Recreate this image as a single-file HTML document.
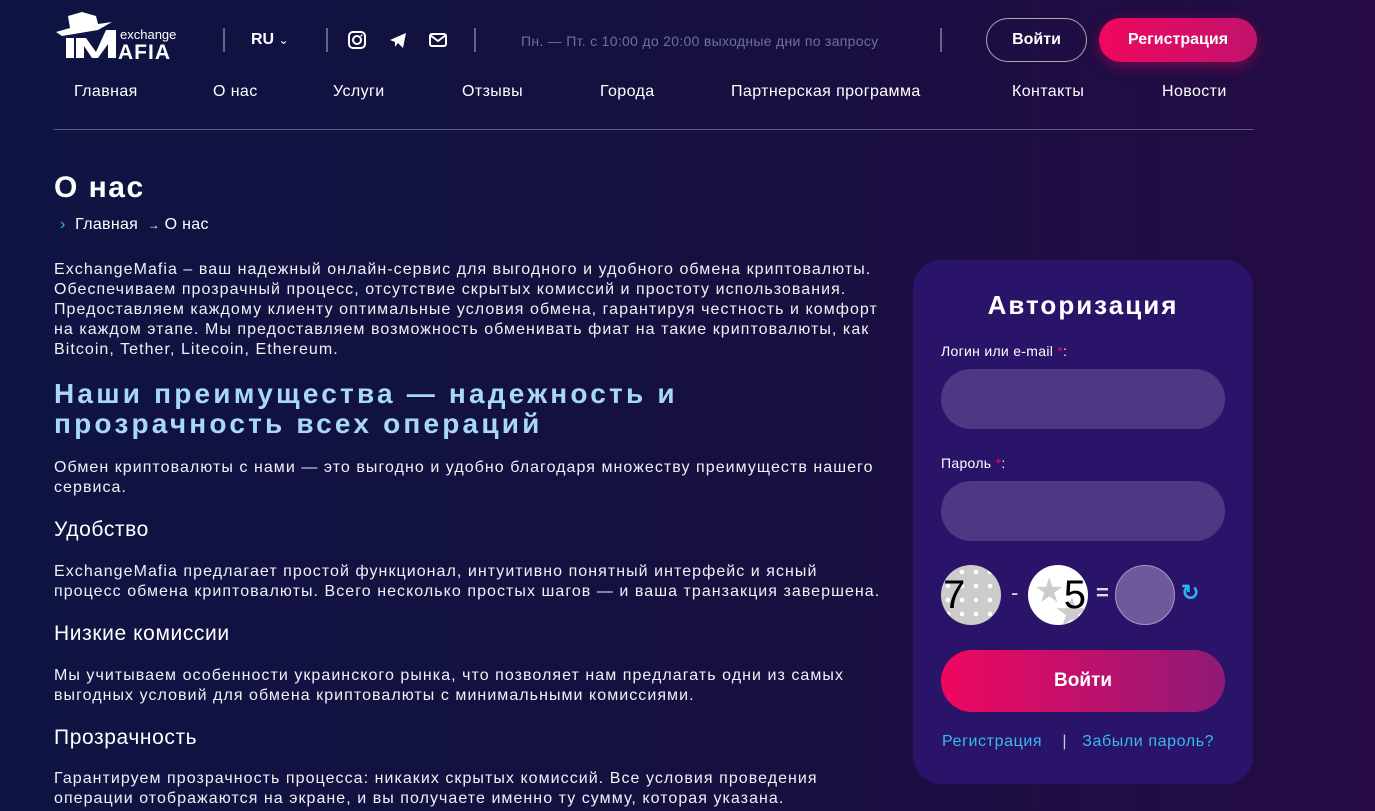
<!DOCTYPE html>
<html><head><meta charset="utf-8"><style>
*{margin:0;padding:0;box-sizing:border-box}
body{width:1375px;height:811px;overflow:hidden;font-family:"Liberation Sans",sans-serif;color:#fff;background:linear-gradient(90deg,#0e1442 0%,#151040 50%,#260b45 100%);position:relative}
.a{position:absolute}
.sep{position:absolute;top:28px;width:2px;height:24px;background:rgba(255,255,255,.35)}
.nav span{position:absolute;top:83px;font-size:16px;letter-spacing:.4px}
p.t{position:absolute;left:54px;font-size:16px;letter-spacing:1.05px;line-height:20px;color:#f0f0f5;white-space:nowrap}
h3{position:absolute;left:54px;font-weight:normal;font-size:21px;letter-spacing:.6px}
.card{left:913px;top:260px;width:340px;height:524px;border-radius:28px;background:#29146a}
.inp{position:absolute;left:28px;width:284px;height:60px;border-radius:30px;background:#4e3883}
.lbl{position:absolute;left:28px;font-size:14px;letter-spacing:.3px}
</style></head><body>
<div class="a" style="left:54px;top:8px;width:145px;height:52px">
<svg width="145" height="52"><path d="M14 8 L28 4 L42 8 L44 16 L58 14 L44 22 L8 28 L2 24 L16 20Z" fill="#fff"/><path d="M12 30 L20 30 L20 50 L12 50Z M22 30 L32 30 L42 44 L52 22 L62 22 L62 50 L54 50 L54 36 L44 50 L38 50 L30 38 L30 50 L22 50Z" fill="#fff"/><text x="66" y="31" font-size="13" fill="#fff" font-family="Liberation Sans">exchange</text><text x="64" y="51" font-size="21" fill="#fff" font-family="Liberation Sans" font-weight="bold" letter-spacing="1">AFIA</text></svg></div>
<div class="sep" style="left:223px"></div>
<div class="a" style="left:251px;top:31px;font-weight:bold;font-size:16px">RU <span style="font-weight:normal;font-size:12px">&#8964;</span></div>
<div class="sep" style="left:326px"></div>
<svg class="a" style="left:348px;top:31px" width="100" height="20"><rect x="1" y="1" width="16" height="16" rx="4" fill="none" stroke="#fff" stroke-width="2"/><circle cx="9" cy="9" r="4" fill="none" stroke="#fff" stroke-width="2"/><circle cx="13.5" cy="4.5" r="1" fill="#fff"/><path d="M42 9 L58 2 L55 17 L50 12 L47 16 L47 11 Z" fill="#fff"/><rect x="82" y="3" width="16" height="12" rx="2" fill="none" stroke="#fff" stroke-width="2"/><path d="M82 4 L90 10 L98 4" fill="none" stroke="#fff" stroke-width="2"/></svg>
<div class="sep" style="left:474px"></div>
<div class="a" style="left:521px;top:33px;font-size:14px;letter-spacing:.3px;color:#6f7193">Пн. — Пт. с 10:00 до 20:00 выходные дни по запросу</div>
<div class="sep" style="left:940px"></div>
<div class="a" style="left:986px;top:18px;width:101px;height:44px;border:1px solid #aaa;border-radius:22px;text-align:center;line-height:42px;font-weight:bold;font-size:16px">Войти</div>
<div class="a" style="left:1099px;top:18px;width:158px;height:44px;border-radius:22px;background:linear-gradient(90deg,#f0075f,#c0136d);text-align:center;line-height:44px;font-weight:bold;font-size:16px;box-shadow:0 4px 14px rgba(240,7,95,.4)">Регистрация</div>
<div class="nav"><span style="left:74px">Главная</span><span style="left:213px">О нас</span><span style="left:333px">Услуги</span><span style="left:462px">Отзывы</span><span style="left:600px">Города</span><span style="left:731px">Партнерская программа</span><span style="left:1012px">Контакты</span><span style="left:1162px">Новости</span></div>
<div class="a" style="left:54px;top:129px;width:1200px;height:1px;background:#5a5d80"></div>
<div class="a" style="left:54px;top:171px;font-size:30px;letter-spacing:1.5px;font-weight:bold">О нас</div>
<div class="a" style="left:60px;top:216px;font-size:16px;letter-spacing:.3px"><span style="color:#3ab8f0">›</span>&nbsp; Главная &nbsp;<span style="font-size:12px">→</span> О нас</div>
<p class="t" style="top:260px">ExchangeMafia – ваш надежный онлайн-сервис для выгодного и удобного обмена криптовалюты.<br>Обеспечиваем прозрачный процесс, отсутствие скрытых комиссий и простоту использования.<br>Предоставляем каждому клиенту оптимальные условия обмена, гарантируя честность и комфорт<br>на каждом этапе. Мы предоставляем возможность обменивать фиат на такие криптовалюты, как<br>Bitcoin, Tether, Litecoin, Ethereum.</p>
<div class="a" style="left:54px;top:379px;font-size:28px;line-height:30px;color:#a8d8f8;font-weight:bold;letter-spacing:3.2px;white-space:nowrap">Наши преимущества — надежность и<br>прозрачность всех операций</div>
<p class="t" style="top:458px">Обмен криптовалюты с нами — это выгодно и удобно благодаря множеству преимуществ нашего<br>сервиса.</p>
<h3 style="top:518px">Удобство</h3>
<p class="t" style="top:562px">ExchangeMafia предлагает простой функционал, интуитивно понятный интерфейс и ясный<br>процесс обмена криптовалюты. Всего несколько простых шагов — и ваша транзакция завершена.</p>
<h3 style="top:622px">Низкие комиссии</h3>
<p class="t" style="top:666px">Мы учитываем особенности украинского рынка, что позволяет нам предлагать одни из самых<br>выгодных условий для обмена криптовалюты с минимальными комиссиями.</p>
<h3 style="top:726px">Прозрачность</h3>
<p class="t" style="top:769px">Гарантируем прозрачность процесса: никаких скрытых комиссий. Все условия проведения<br>операции отображаются на экране, и вы получаете именно ту сумму, которая указана.</p>
<div class="a card">
<div class="a" style="left:0;width:340px;top:30px;text-align:center;font-size:26px;font-weight:bold;letter-spacing:2px">Авторизация</div>
<div class="lbl" style="top:83px">Логин или e-mail <span style="color:#f0075f">*</span>:</div>
<div class="inp" style="top:109px"></div>
<div class="lbl" style="top:195px">Пароль <span style="color:#f0075f">*</span>:</div>
<div class="inp" style="top:221px"></div>
<div class="a" style="left:28px;top:305px;width:60px;height:60px;border-radius:50%;background:#ccc radial-gradient(circle,#fff 2px,transparent 2.5px) 0 0/14px 14px;color:#000;font-size:40px;line-height:60px;padding-left:2px">7</div>
<div class="a" style="left:98px;top:320px;font-size:22px;color:#ddd">-</div>
<div class="a" style="left:115px;top:305px;width:60px;height:60px;border-radius:50%;background:#fff;color:#000;font-size:40px;line-height:60px;text-align:right;padding-right:2px;overflow:hidden"><span style="position:absolute;left:6px;top:-4px;color:#ccc;font-size:34px">★</span><span style="position:absolute;left:26px;top:18px;color:#ccc;font-size:40px">★</span><span style="position:relative">5</span></div>
<div class="a" style="left:183px;top:320px;font-size:22px;color:#ddd;font-weight:bold">=</div>
<div class="a" style="left:202px;top:305px;width:60px;height:60px;border-radius:50%;background:#6e5a9a;border:1px solid #a895cc"></div>
<div class="a" style="left:268px;top:320px;font-size:22px;color:#2bb5ee;font-weight:bold">↻</div>
<div class="a" style="left:28px;top:390px;width:284px;height:62px;border-radius:31px;background:linear-gradient(90deg,#f0075f,#8f1a78);text-align:center;line-height:62px;font-weight:bold;font-size:19px">Войти</div>
<div class="a" style="left:29px;top:473px;font-size:16px;letter-spacing:.6px;color:#3ab8f0;white-space:nowrap">Регистрация &nbsp;&nbsp; <span style="color:#ccc">|</span> &nbsp;&nbsp;Забыли пароль?</div>
</div>
</body></html>
